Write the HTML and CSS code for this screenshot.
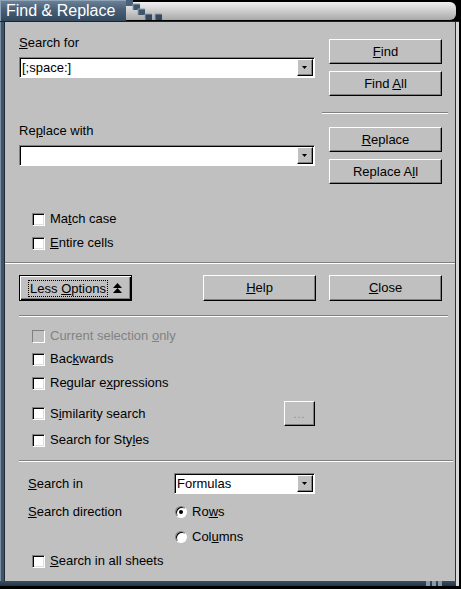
FILE: index.html
```html
<!DOCTYPE html>
<html>
<head>
<meta charset="utf-8">
<link rel="stylesheet" href="styles.css">
</head>
<body>
<div class="win">
  <div class="titlebar">
    <div class="tab">Find &amp; Replace</div>
    <div class="bar"></div>
    <svg class="steps" width="40" height="21" viewBox="0 0 40 21">
      <rect x="0" y="0" width="7" height="6" fill="#4a6078"/>
      <rect x="7" y="4" width="7" height="6" fill="#3f5569"/>
      <rect x="12" y="9" width="7" height="6" fill="#3f5569"/>
      <rect x="19" y="14" width="7" height="6" fill="#34495d"/>
      <rect x="29" y="14" width="7" height="6" fill="#34495d"/>
      <path d="M7 4h7M7 4v6M12 9h7M12 9v6M19 14h7M19 14v6M29 14h7M29 14v6" stroke="#8da2b6" stroke-width="1" fill="none"/>
    </svg>
  </div>
  <div class="frame">
    <div class="lb"></div>
    <div class="main">
      <div class="top">
        <div class="lcol">
          <div class="lbl l1"><u>S</u>earch for</div>
          <div class="combo c1"><span class="val">[;space:]</span><span class="dd"><svg width="5" height="3" viewBox="0 0 5 3"><path d="M0 0H5L2.5 3Z"/></svg></span></div>
          <div class="lbl l2">Re<u>p</u>lace with</div>
          <div class="combo c2"><span class="val"></span><span class="dd"><svg width="5" height="3" viewBox="0 0 5 3"><path d="M0 0H5L2.5 3Z"/></svg></span></div>
          <div class="chk ck1"><span class="box"></span><span class="t">Ma<u>t</u>ch case</span></div>
          <div class="chk ck2"><span class="box"></span><span class="t"><u>E</u>ntire cells</span></div>
        </div>
        <div class="rcol">
          <div class="btn b1"><span class="t"><u>F</u>ind</span></div>
          <div class="btn b2"><span class="t">Find <u>A</u>ll</span></div>
          <div class="sep rsep"></div>
          <div class="btn b3"><span class="t"><u>R</u>eplace</span></div>
          <div class="btn b4"><span class="t">Replace A<u>l</u>l</span></div>
        </div>
      </div>
      <div class="sep full"></div>
      <div class="brow">
        <div class="btn def"><span class="focus">Less <u>O</u>ptions</span><svg class="up" width="9" height="10" viewBox="0 0 9 10"><path d="M4.5 0L9 5H0Z M4.5 5L9 10H0Z"/></svg></div>
        <div class="btn help"><span class="t"><u>H</u>elp</span></div>
        <div class="btn close"><span class="t"><u>C</u>lose</span></div>
      </div>
      <div class="sep sep2"></div>
      <div class="opts">
        <div class="chk o1 dis"><span class="box"></span><span class="t">Current selection <u>o</u>nly</span></div>
        <div class="chk o2"><span class="box"></span><span class="t">Bac<u>k</u>wards</span></div>
        <div class="chk o3"><span class="box"></span><span class="t">Regular e<u>x</u>pressions</span></div>
        <div class="chk o4"><span class="box"></span><span class="t">S<u>i</u>milarity search</span><span class="btn dots">...</span></div>
        <div class="chk o5"><span class="box"></span><span class="t">Search for Sty<u>l</u>es</span></div>
      </div>
      <div class="sep sep3"></div>
      <div class="sgrid">
        <div class="srow s1"><span class="slbl"><u>S</u>earch in</span><div class="combo c3"><span class="val">Formulas</span><span class="dd"><svg width="5" height="3" viewBox="0 0 5 3"><path d="M0 0H5L2.5 3Z"/></svg></span></div></div>
        <div class="srow s2"><span class="slbl"><u>S</u>earch direction</span><span class="radio on"></span><span class="t">Ro<u>w</u>s</span></div>
        <div class="srow s3"><span class="slbl"></span><span class="radio"></span><span class="t">Col<u>u</u>mns</span></div>
      </div>
      <div class="chk ck3"><span class="box"></span><span class="t"><u>S</u>earch in all sheets</span></div>
    </div>
    <div class="rb"></div>
  </div>
  <div class="bottom"><span class="grip"></span><span class="grip"></span><span class="grip"></span></div>
</div>
</body>
</html>
```
FILE: styles.css
```css
html, body {
  margin: 0;
  padding: 0;
  background: #000;
}
body {
  font-family: "Liberation Sans", Arial, sans-serif;
  font-size: 13px;
  color: #000;
}
u {
  text-underline-offset: 1px;
}
.t {
  white-space: pre;
}
.win {
  width: 461px;
  height: 589px;
  display: flex;
  flex-direction: column;
  position: relative;
}
.titlebar {
  height: 21px;
  display: flex;
  flex-shrink: 0;
}
.tab {
  width: 126px;
  height: 21px;
  box-sizing: border-box;
  padding-left: 6px;
  color: #fff;
  font-size: 16px;
  line-height: 22px;
  background: linear-gradient(#6e849a, #4a6078 45%, #34495e 100%);
  box-shadow: inset 1px 1px #8fa3b6;
}
.bar {
  flex: 1;
  height: 18px;
  margin: 2px 5px 1px 0;
  border-radius: 0 6px 6px 0;
  background: linear-gradient(#f0f0f0, #d4d4d4 40%, #a8a8a8 100%);
}
.steps {
  position: absolute;
  left: 126px;
  top: 0;
}
.frame {
  flex: 1;
  display: flex;
  border-top: 1px solid #1a2530;
  margin-right: 2px;
}
.lb {
  width: 5px;
  background: linear-gradient(90deg, #7a8ea2 0 1px, #3e546a 1px 4px, #1e2a36 4px 5px);
}
.rb {
  width: 4px;
  background: linear-gradient(90deg, #303030 0 1px, #d8d8d8 1px 4px);
}
.main {
  flex: 1;
  background: #c0c0c0;
  padding-left: 14px;
}
.bottom {
  height: 5px;
  margin: 0 2px 3px 0;
  background: linear-gradient(#3a4f64, #243444);
  display: flex;
  justify-content: flex-end;
  gap: 2px;
  padding-right: 17px;
  box-shadow: inset -3px 0 #d8d8d8;
}
.grip {
  width: 4px;
  height: 5px;
  background: #8a9aaa;
}

/* top section */
.top {
  display: flex;
}
.lcol {
  width: 296px;
}
.lbl {
  height: 16px;
  line-height: 16px;
}
.l1 { margin-top: 13px; }
.l2 { margin-top: 45px; }
.combo {
  height: 21px;
  box-sizing: border-box;
  background: #fff;
  border: 1px solid;
  border-color: #808080 #fff #fff #808080;
  box-shadow: inset 1px 1px #000;
  display: flex;
  align-items: stretch;
}
.c1 { margin-top: 6px; width: 296px; }
.c2 { margin-top: 6px; width: 296px; }
.val {
  flex: 1;
  padding-left: 2px;
  padding-top: 1px;
  line-height: 18px;
}
.dd {
  width: 16px;
  margin: 1px 1px 1px 0;
  box-sizing: border-box;
  background: #c0c0c0;
  border: 1px solid;
  border-color: #fff #000 #000 #fff;
  box-shadow: inset -1px -1px #808080;
  display: flex;
  align-items: center;
  justify-content: center;
}
.dd svg {
  display: block;
  margin-left: -1px;
}
.chk {
  height: 16px;
  line-height: 16px;
  display: flex;
  align-items: center;
  padding-left: 13px;
}
.box {
  width: 13px;
  height: 13px;
  box-sizing: border-box;
  background: #fff;
  border: 1px solid;
  border-color: #808080 #fff #fff #808080;
  box-shadow: inset 1px 1px #000, inset -1px -1px #dfdfdf;
  margin-right: 5px;
  flex-shrink: 0;
}
.ck1 { margin-top: 45px; }
.ck2 { margin-top: 8px; }
.rcol {
  margin-left: 14px;
  width: 113px;
}
.btn {
  width: 113px;
  height: 25px;
  box-sizing: border-box;
  background: #c0c0c0;
  border: 1px solid;
  border-color: #fff #000 #000 #fff;
  box-shadow: inset -1px -1px #808080;
  display: flex;
  align-items: center;
  justify-content: center;
  line-height: 16px;
}
.b1 { margin-top: 17px; }
.b2 { margin-top: 7px; }
.b3 { margin-top: 13px; }
.b4 { margin-top: 7px; }
.sep {
  height: 0;
  border-top: 1px solid #808080;
  border-bottom: 1px solid #fff;
}
.rsep {
  margin-top: 16px;
  margin-left: -7px;
  width: 126px;
}
.full {
  margin-top: 11px;
  margin-left: -14px;
  width: 450px;
}

/* buttons row */
.brow {
  margin-top: 11px;
  display: flex;
}
.brow .btn {
  height: 26px;
}
.brow .def {
  border: 1px solid #000;
  box-shadow: inset 1px 1px #fff, inset -1px -1px #000, inset -2px -2px #808080;
}
.focus {
  outline: 1px dotted #000;
  padding: 0 1px;
  line-height: 15px;
  white-space: pre;
}
.up {
  margin-left: 6px;
  display: block;
}
.help { margin-left: 71px; }
.close { margin-left: 13px; }
.sep2 {
  margin-top: 14px;
  width: 429px;
}

/* options */
.opts {
  width: 296px;
}
.o1 { margin-top: 11px; }
.o2 { margin-top: 7px; }
.o3 { margin-top: 8px; }
.o4 { margin-top: 10px; height: 25px; }
.o5 { margin-top: 6px; }
.dis {
  color: #828282;
}
.dis .box {
  background: #c0c0c0;
  box-shadow: inset 1px 1px #c0c0c0;
}
.dots {
  width: 31px;
  margin-left: auto;
  color: #8a8a8a;
  font-size: 11px;
  align-items: flex-end;
  padding-bottom: 3px;
  letter-spacing: 1px;
}
.sep3 {
  margin-top: 12px;
  width: 434px;
}

/* search grid */
.sgrid {
  padding-left: 9px;
}
.srow {
  display: flex;
  align-items: center;
  height: 16px;
  line-height: 16px;
}
.slbl {
  width: 146px;
  flex-shrink: 0;
}
.s1 { margin-top: 11px; height: 21px; }
.s2 { margin-top: 10px; }
.s3 { margin-top: 9px; }
.c3 { width: 141px; }
.radio {
  width: 12px;
  height: 12px;
  box-sizing: border-box;
  border-radius: 50%;
  background: #fff;
  border: 1px solid;
  border-color: #808080 #fff #fff #808080;
  box-shadow: inset 1px 1px #000;
  margin: 0 5px 0 1px;
  display: flex;
  align-items: center;
  justify-content: center;
}
.radio.on::after {
  content: "";
  width: 4px;
  height: 4px;
  border-radius: 50%;
  background: #000;
}
.ck3 { margin-top: 8px; }
```
